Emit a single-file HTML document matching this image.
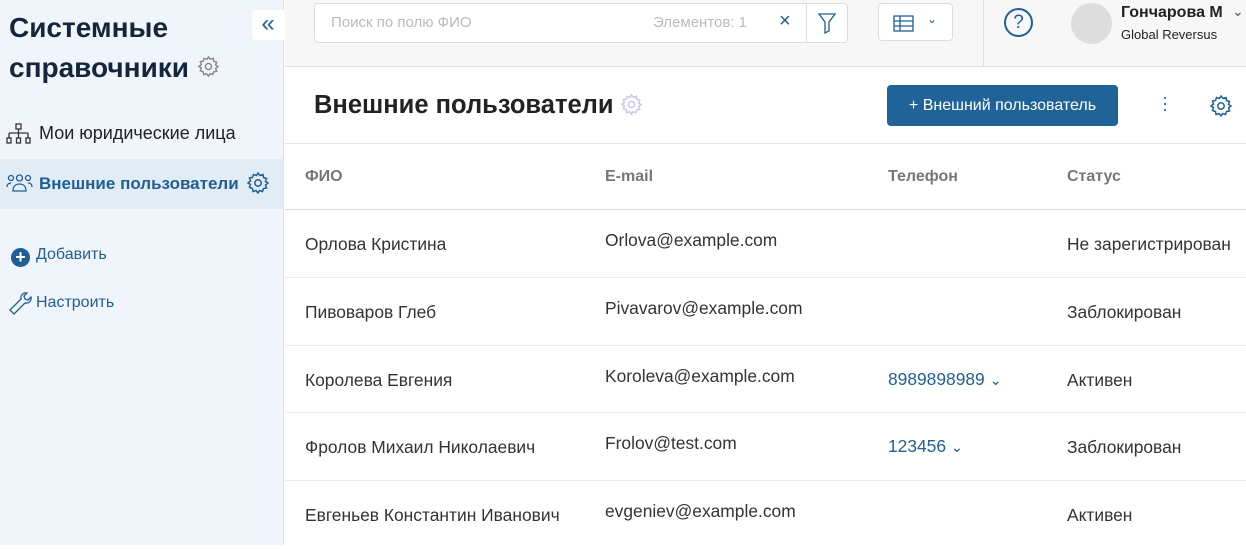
<!DOCTYPE html>
<html><head><meta charset="utf-8"><style>
*{box-sizing:border-box;margin:0;padding:0}
body{width:1246px;height:545px;overflow:hidden;font-family:"Liberation Sans","Noto Sans CJK SC",sans-serif;background:#fff;position:relative;color:#333}
.side{position:absolute;left:0;top:0;width:284px;height:545px;background:#f0f5fb;border-right:1px solid #dde2e8}
.abs{position:absolute}
.top{position:absolute;left:285px;top:0;width:961px;height:67px;background:#f7f7f7;border-bottom:1px solid #e0e0e0}
.row{position:absolute;left:285px;width:961px;border-bottom:1px solid #ececec;font-size:17.4px}
.row span{position:absolute}
.blue{color:#1f5f94}
</style></head><body>
<div class="side">
  <div class="abs" style="left:9px;top:8px;font-size:28px;font-weight:bold;color:#15253a;line-height:40px">Системные<br>справочники</div>
  <svg class="abs" style="left:197px;top:55px" width="23" height="23" viewBox="0 0 24 24" fill="none" stroke="#888" stroke-width="1.5"><circle cx="12" cy="12" r="3.2"/><path d="M12 2l2 2.5 3-1 .5 3 3 1-1 3L22 12l-2.5 2 1 3-3 .5-1 3-3-1L12 22l-2-2.5-3 1-.5-3-3-1 1-3L2 12l2.5-2-1-3 3-.5 1-3 3 1z"/></svg>
  <div class="abs" style="left:252px;top:10px;width:32px;height:30px;background:#fff;border-radius:4px 0 0 4px;color:#1f5f94;font-size:24px;text-align:center;line-height:28px">«</div>
  <svg class="abs" style="left:6px;top:123px" width="26" height="22" viewBox="0 0 26 22" fill="none" stroke="#333" stroke-width="1.3"><rect x="10" y="1" width="5" height="5"/><path d="M12.5 6v4M3 10h19M3 10v5M12.5 10v5M22 10v5"/><rect x="1" y="15" width="4" height="5"/><rect x="10.5" y="15" width="4" height="5"/><rect x="20" y="15" width="4" height="5"/></svg>
  <div class="abs" style="left:39px;top:123px;font-size:18px;color:#222">Мои юридические лица</div>
  <div class="abs" style="left:0;top:159px;width:283px;height:50px;background:#e2ecf5"></div>
  <svg class="abs" style="left:6px;top:173px" width="27" height="20" viewBox="0 0 27 20" fill="none" stroke="#1f5f94" stroke-width="1.3"><circle cx="5" cy="5" r="2.5"/><circle cx="13.5" cy="5" r="3"/><circle cx="22" cy="5" r="2.5"/><path d="M1 14c0-3 2-4 4-4M26 14c0-3-2-4-4-4M7 18c0-5 3-7 6.5-7s6.5 2 6.5 7z"/></svg>
  <div class="abs blue" style="left:39px;top:174px;font-size:17px;font-weight:bold">Внешние пользователи</div>
  <svg class="abs" style="left:246px;top:171px" width="24" height="24" viewBox="0 0 24 24" fill="none" stroke="#1f5f94" stroke-width="1.5"><circle cx="12" cy="12" r="3.2"/><path d="M12 2l2 2.5 3-1 .5 3 3 1-1 3L22 12l-2.5 2 1 3-3 .5-1 3-3-1L12 22l-2-2.5-3 1-.5-3-3-1 1-3L2 12l2.5-2-1-3 3-.5 1-3 3 1z"/></svg>
  <div class="abs" style="left:11px;top:248px;width:19px;height:19px;border-radius:50%;background:#1f5f94;color:#fff;font-size:18px;font-weight:bold;text-align:center;line-height:19px">+</div>
  <div class="abs blue" style="left:36px;top:246px;font-size:16px">Добавить</div>
  <svg class="abs" style="left:9px;top:290px" width="24" height="26" viewBox="0 0 24 26" fill="none" stroke="#1f5f94" stroke-width="1.3"><path d="M3 23l11-11a5 5 0 0 0 6-6l-3 3-3-1-1-3 3-3a5 5 0 0 0-6 6L-1 19z" transform="translate(2,1)"/></svg>
  <div class="abs blue" style="left:36px;top:294px;font-size:16px">Настроить</div>
</div>
<div class="top">
  <div class="abs" style="left:29px;top:3px;width:534px;height:40px;background:#fff;border:1px solid #ddd;border-radius:4px"></div>
  <div class="abs" style="left:46px;top:14px;font-size:15px;color:#bbb">Поиск по полю ФИО</div>
  <div class="abs" style="left:368px;top:14px;font-size:15px;color:#bbb">Элементов: 1</div>
  <div class="abs" style="left:494px;top:10px;font-size:20px;color:#1f5f94">×</div>
  <div class="abs" style="left:521px;top:4px;width:1px;height:38px;background:#ddd"></div>
  <svg class="abs" style="left:532px;top:12px" width="20" height="22" viewBox="0 0 20 22" fill="none" stroke="#1f5f94" stroke-width="1.3"><path d="M2 2h16l-6 8v9l-4 2V10z"/></svg>
  <div class="abs" style="left:593px;top:3px;width:75px;height:38px;background:#fff;border:1px solid #ddd;border-radius:4px"></div>
  <svg class="abs" style="left:608px;top:15px" width="21" height="17" viewBox="0 0 21 17" fill="none" stroke="#1f5f94" stroke-width="1.3"><rect x="1" y="1" width="19" height="15"/><path d="M1 6h19M1 11h19M7 1v15"/></svg>
  <div class="abs" style="left:642px;top:12px;font-size:12px;color:#1f5f94">⌄</div>
  <div class="abs" style="left:698px;top:0;width:1px;height:67px;background:#e0e0e0"></div>
  <div class="abs" style="left:719px;top:8px;width:29px;height:29px;border:2px solid #1f5f94;border-radius:50%;color:#1f5f94;font-size:19px;text-align:center;line-height:26px">?</div>
  <div class="abs" style="left:786px;top:3px;width:41px;height:41px;border-radius:50%;background:#ddd"></div>
  <div class="abs" style="left:836px;top:4px;font-size:16px;font-weight:bold;color:#222">Гончарова М</div>
  <div class="abs" style="left:947px;top:3px;font-size:14px;color:#555">⌄</div>
  <div class="abs" style="left:836px;top:27px;font-size:13px;color:#222">Global Reversus</div>
</div>
<div class="abs" style="left:314px;top:91px;font-size:25.5px;font-weight:bold;color:#222">Внешние пользователи</div>
<svg class="abs" style="left:620px;top:93px" width="23" height="23" viewBox="0 0 24 24" fill="none" stroke="#c8c4ea" stroke-width="1.5"><circle cx="12" cy="12" r="3.2"/><path d="M12 2l2 2.5 3-1 .5 3 3 1-1 3L22 12l-2.5 2 1 3-3 .5-1 3-3-1L12 22l-2-2.5-3 1-.5-3-3-1 1-3L2 12l2.5-2-1-3 3-.5 1-3 3 1z"/></svg>
<div class="abs" style="left:887px;top:85px;width:231px;height:41px;background:#1f6398;border-radius:4px;color:#fff;font-size:16px;text-align:center;line-height:41px">+ Внешний пользователь</div>
<div class="abs" style="left:1162px;top:94px;font-size:18px;color:#1f5f94;line-height:6px">·<br>·<br>·</div>
<svg class="abs" style="left:1209px;top:94px" width="24" height="24" viewBox="0 0 24 24" fill="none" stroke="#1f5f94" stroke-width="1.5"><circle cx="12" cy="12" r="3.2"/><path d="M12 2l2 2.5 3-1 .5 3 3 1-1 3L22 12l-2.5 2 1 3-3 .5-1 3-3-1L12 22l-2-2.5-3 1-.5-3-3-1 1-3L2 12l2.5-2-1-3 3-.5 1-3 3 1z"/></svg>
<div class="abs" style="left:285px;top:143px;width:961px;height:1px;background:#e4e4e4"></div>
<div class="row" style="top:144px;height:66px;border-bottom-color:#d8d8d8;font-weight:bold;font-size:16px;color:#777">
  <span style="left:20px;top:24px">ФИО</span><span style="left:320px;top:24px">E-mail</span><span style="left:603px;top:24px">Телефон</span><span style="left:782px;top:24px">Статус</span>
</div>
<div class="row" style="top:210px;height:68px"><span style="left:20px;top:24px">Орлова Кристина</span><span style="left:320px;top:20px">Orlova@example.com</span><span style="left:782px;top:24px">Не зарегистрирован</span></div>
<div class="row" style="top:278px;height:68px"><span style="left:20px;top:24px">Пивоваров Глеб</span><span style="left:320px;top:20px">Pivavarov@example.com</span><span style="left:782px;top:24px">Заблокирован</span></div>
<div class="row" style="top:346px;height:67px"><span style="left:20px;top:24px">Королева Евгения</span><span style="left:320px;top:20px">Koroleva@example.com</span><span class="blue" style="left:603px;top:23px">8989898989 <small>⌄</small></span><span style="left:782px;top:24px">Активен</span></div>
<div class="row" style="top:413px;height:68px"><span style="left:20px;top:24px">Фролов Михаил Николаевич</span><span style="left:320px;top:20px">Frolov@test.com</span><span class="blue" style="left:603px;top:23px">123456 <small>⌄</small></span><span style="left:782px;top:24px">Заблокирован</span></div>
<div class="row" style="top:481px;height:68px;border:none"><span style="left:20px;top:24px">Евгеньев Константин Иванович</span><span style="left:320px;top:20px">evgeniev@example.com</span><span style="left:782px;top:24px">Активен</span></div>
</body></html>
